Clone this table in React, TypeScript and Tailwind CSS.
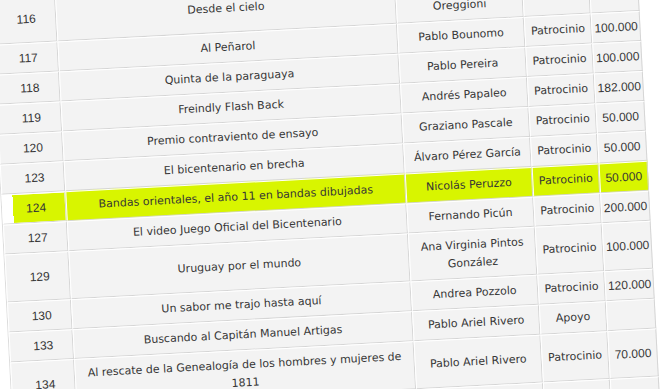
import React from "react";

type Row = {
  num: string;
  title: React.ReactNode;
  name: React.ReactNode;
  kind: string;
  amount: string;
  hl?: boolean;
};

const rows: Row[] = [
  { num: "116", title: "Desde el cielo", name: <>Francisco<br />Oreggioni</>, kind: "", amount: "" },
  { num: "117", title: "Al Peñarol", name: "Pablo Bounomo", kind: "Patrocinio", amount: "100.000" },
  { num: "118", title: "Quinta de la paraguaya", name: "Pablo Pereira", kind: "Patrocinio", amount: "100.000" },
  { num: "119", title: "Freindly Flash Back", name: "Andrés Papaleo", kind: "Patrocinio", amount: "182.000" },
  { num: "120", title: "Premio contraviento de ensayo", name: "Graziano Pascale", kind: "Patrocinio", amount: "50.000" },
  { num: "123", title: "El bicentenario en brecha", name: "Álvaro Pérez García", kind: "Patrocinio", amount: "50.000" },
  {
    num: "124",
    title: "Bandas orientales, el año 11 en bandas dibujadas",
    name: "Nicolás Peruzzo",
    kind: "Patrocinio",
    amount: "50.000",
    hl: true,
  },
  { num: "127", title: "El video Juego Oficial del Bicentenario", name: "Fernando Picún", kind: "Patrocinio", amount: "200.000" },
  { num: "129", title: "Uruguay por el mundo", name: "Ana Virginia Pintos González", kind: "Patrocinio", amount: "100.000" },
  { num: "130", title: "Un sabor me trajo hasta aquí", name: "Andrea Pozzolo", kind: "Patrocinio", amount: "120.000" },
  { num: "133", title: "Buscando al Capitán Manuel Artigas", name: "Pablo Ariel Rivero", kind: "Apoyo", amount: "" },
  {
    num: "134",
    title: "Al rescate de la Genealogía de los hombres y mujeres de 1811",
    name: "Pablo Ariel Rivero",
    kind: "Patrocinio",
    amount: "70.000",
  },
  { num: "", title: "", name: "", kind: "", amount: "" },
];

const cell =
  "border-t border-l border-t-white border-l-white border-b border-r border-b-[#d5d5d5] border-r-[#d5d5d5] align-middle text-center text-[#363636]";

export default function App() {
  return (
    <div className="w-[662px] h-[389px] overflow-hidden bg-white">
      <table
        className="ml-[-10px] mt-[-3px] w-[647px] table-fixed border-separate border-spacing-0 border-l border-l-[#dcdcdc] origin-top-left rotate-[-3deg]"
      >
        <colgroup>
          <col className="w-[64px]" />
          <col className="w-[340px]" />
          <col className="w-[127px]" />
          <col className="w-[67px]" />
          <col className="w-[49px]" />
        </colgroup>
        <tbody>
          {rows.map((r, i) => {
            const bg = r.hl ? "bg-[#d8f500]" : "bg-[#f3f3f3]";
            return (
              <tr key={i} className="h-[30px]">
                <td
                  className={`${cell} ${
                    r.hl ? "bg-[linear-gradient(to_right,#ffffff_10px,#d8f500_10px)]" : bg
                  } py-[5px] pl-[4px] font-['Liberation_Sans',Arial,sans-serif] text-[12px] leading-[18px]`}
                >
                  {r.num}
                </td>
                <td className={`${cell} ${bg} py-[5px] px-[8px] font-['DejaVu_Sans',sans-serif] text-[11px] leading-[18px]`}>
                  {r.title}
                </td>
                <td className={`${cell} ${bg} py-[5px] px-[3px] font-['DejaVu_Sans',sans-serif] text-[11px] leading-[18px]`}>
                  {r.name}
                </td>
                <td className={`${cell} ${bg} py-[5px] px-[2px] font-['DejaVu_Sans',sans-serif] text-[11px] leading-[18px]`}>
                  {r.kind}
                </td>
                <td className={`${cell} ${bg} py-[5px] px-[2px] font-['Liberation_Sans',Arial,sans-serif] text-[12px] leading-[18px]`}>
                  {r.amount}
                </td>
              </tr>
            );
          })}
        </tbody>
      </table>
    </div>
  );
}
